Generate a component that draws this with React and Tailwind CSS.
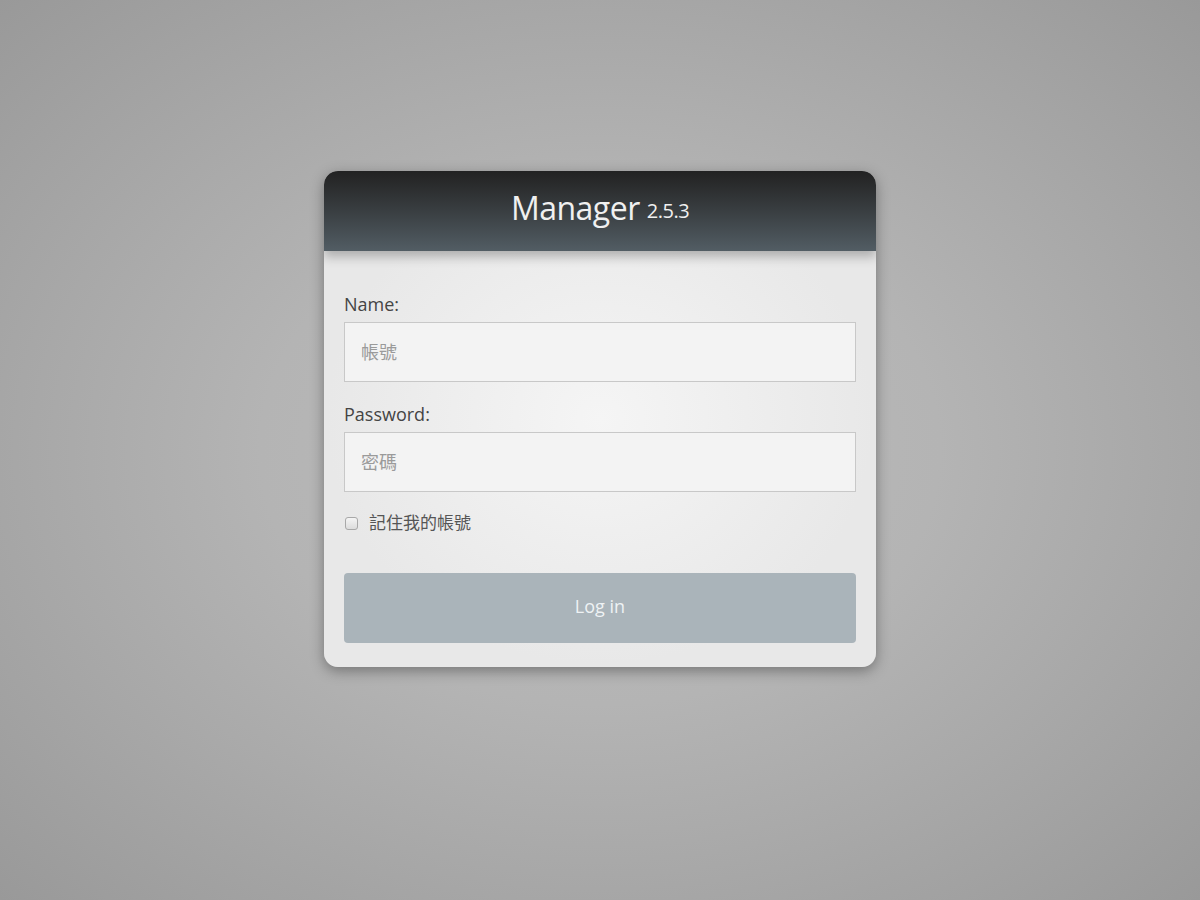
export default function App() {
  const font = { fontFamily: '"Open Sans", "Noto Sans", "Noto Sans CJK TC", sans-serif' };
  return (
    <div
      className="w-[1200px] h-[900px] flex justify-center items-start bg-[radial-gradient(ellipse_at_center,#bcbcbc_0%,#b4b4b4_40%,#999999_100%)]"
      style={font}
    >
      <div className="mt-[171px] w-[552px] rounded-[14px] overflow-hidden bg-[radial-gradient(ellipse_at_center,#f5f5f5_0%,#e8e8e8_70%)] shadow-[0_4px_14px_rgba(0,0,0,0.35)]">
        <div className="relative h-[80px] flex items-center justify-center bg-gradient-to-b from-[#222222] to-[#525d64] shadow-[0_6px_10px_rgba(0,0,0,0.25)]">
          <span className="text-[32px] text-[#f0f0f0] tracking-[-0.5px] mt-[-6px]">Manager</span>
          <span className="text-[20px] text-[#f0f0f0] ml-[7px] tracking-[-0.5px]">2.5.3</span>
        </div>
        <div className="px-[20px] pt-[41px] pb-[24px] flex flex-col">
          <label className="text-[18px] text-[#444] leading-[24px] mb-[6px]">Name:</label>
          <input
            className="h-[60px] w-full border border-[#c8c8c8] bg-[#f3f3f3] px-[16px] text-[18px] text-[#555] placeholder:text-[#9a9a9a] outline-none"
            placeholder="帳號"
            style={font}
          />
          <label className="text-[18px] text-[#444] leading-[24px] mt-[20px] mb-[6px]">Password:</label>
          <input
            className="h-[60px] w-full border border-[#c8c8c8] bg-[#f3f3f3] px-[16px] text-[18px] text-[#555] placeholder:text-[#9a9a9a] outline-none"
            placeholder="密碼"
            style={font}
          />
          <div className="flex items-center mt-[19px] h-[24px]">
            <span className="w-[13px] h-[13px] ml-[1px] rounded-[3px] border border-[#a8a8a8] bg-gradient-to-b from-[#f4f4f4] to-[#dcdcdc]"></span>
            <span className="ml-[11px] text-[17px] text-[#555] leading-[24px]">記住我的帳號</span>
          </div>
          <button className="mt-[38px] h-[70px] w-full rounded-[4px] bg-[#aab4ba] text-[18px] text-[#eef2f4] pb-[3px]" style={font}>
            Log in
          </button>
        </div>
      </div>
    </div>
  );
}
